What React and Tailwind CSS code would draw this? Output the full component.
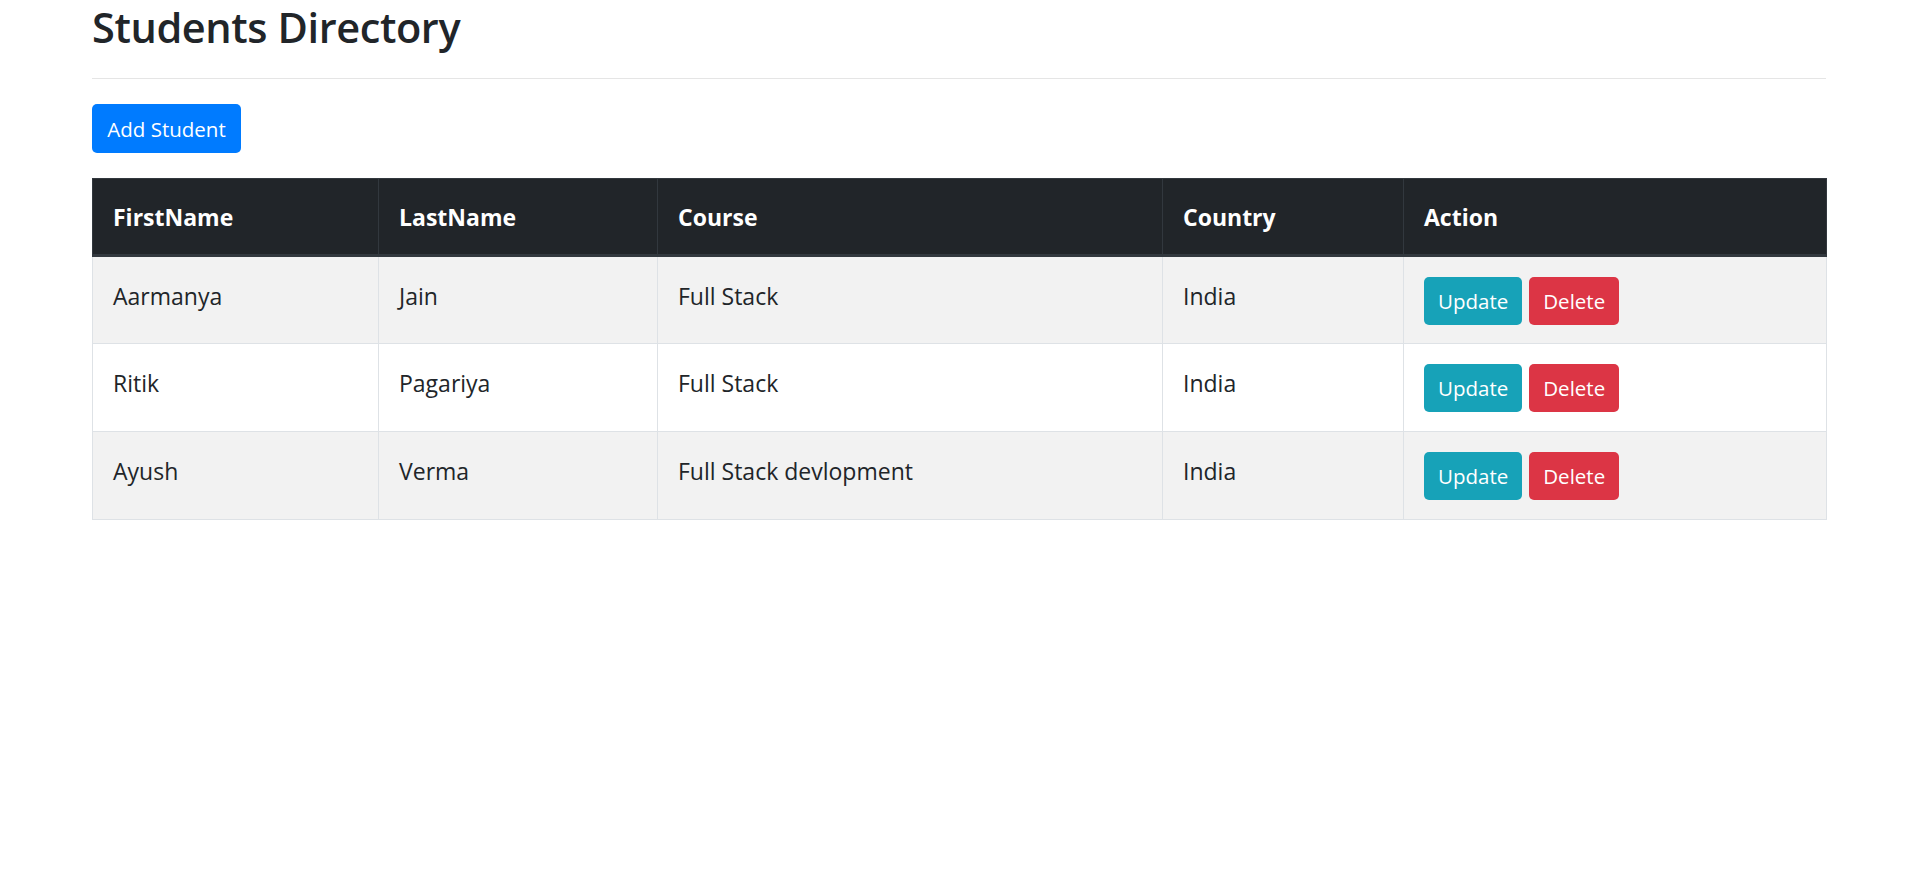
import React from "react";

const rows = [
  { first: "Aarmanya", last: "Jain", course: "Full Stack", country: "India" },
  { first: "Ritik", last: "Pagariya", course: "Full Stack", country: "India" },
  { first: "Ayush", last: "Verma", course: "Full Stack devlopment", country: "India" },
];

const tdCls =
  "h-[88px] border border-[#dee2e6] px-[20px] pt-[21px] align-top leading-[36px]";

export default function App() {
  return (
    <div className="min-h-screen bg-white text-[#212529] [font-family:'Open_Sans','Noto_Sans',sans-serif]">
      <div className="ml-[92px] w-[1734px]">
        <h2 className="pt-[3px] text-[41.5px] font-semibold leading-[48px] tracking-[-0.4px]">
          Students Directory
        </h2>
        <hr className="mt-[27px] border-0 border-t border-[#e5e5e5]" />
        <div className="mt-[25px] flex">
          <button className="h-[49px] w-[149px] rounded-[5px] bg-[#007bff] text-[20.5px] leading-[30px] text-white">
            Add Student
          </button>
        </div>
        <table className="mt-[25px] w-[1734px] table-fixed border-collapse text-[23px]">
          <colgroup>
            <col className="w-[286px]" />
            <col className="w-[279px]" />
            <col className="w-[505px]" />
            <col className="w-[241px]" />
            <col className="w-[423px]" />
          </colgroup>
          <thead>
            <tr className="bg-[#212529] text-white">
              {["FirstName", "LastName", "Course", "Country", "Action"].map((h) => (
                <th
                  key={h}
                  className="h-[77px] border border-[#32383e] border-b-[3px] px-[20px] pt-[20px] pb-[16px] text-left align-top font-bold leading-[36px]"
                >
                  {h}
                </th>
              ))}
            </tr>
          </thead>
          <tbody>
            {rows.map((r, i) => (
              <tr key={i} className={i % 2 === 0 ? "bg-[#f2f2f2]" : "bg-white"}>
                <td className={tdCls}>{r.first}</td>
                <td className={tdCls}>{r.last}</td>
                <td className={tdCls}>{r.course}</td>
                <td className={tdCls}>{r.country}</td>
                <td className="h-[88px] border border-[#dee2e6] px-[20px] pt-[20px] align-top">
                  <div className="flex gap-[7px]">
                    <button className="h-[48px] rounded-[5px] bg-[#17a2b8] px-[14px] text-[20.5px] leading-[30px] text-white">
                      Update
                    </button>
                    <button className="h-[48px] rounded-[5px] bg-[#dc3545] px-[14px] text-[20.5px] leading-[30px] text-white">
                      Delete
                    </button>
                  </div>
                </td>
              </tr>
            ))}
          </tbody>
        </table>
      </div>
    </div>
  );
}
